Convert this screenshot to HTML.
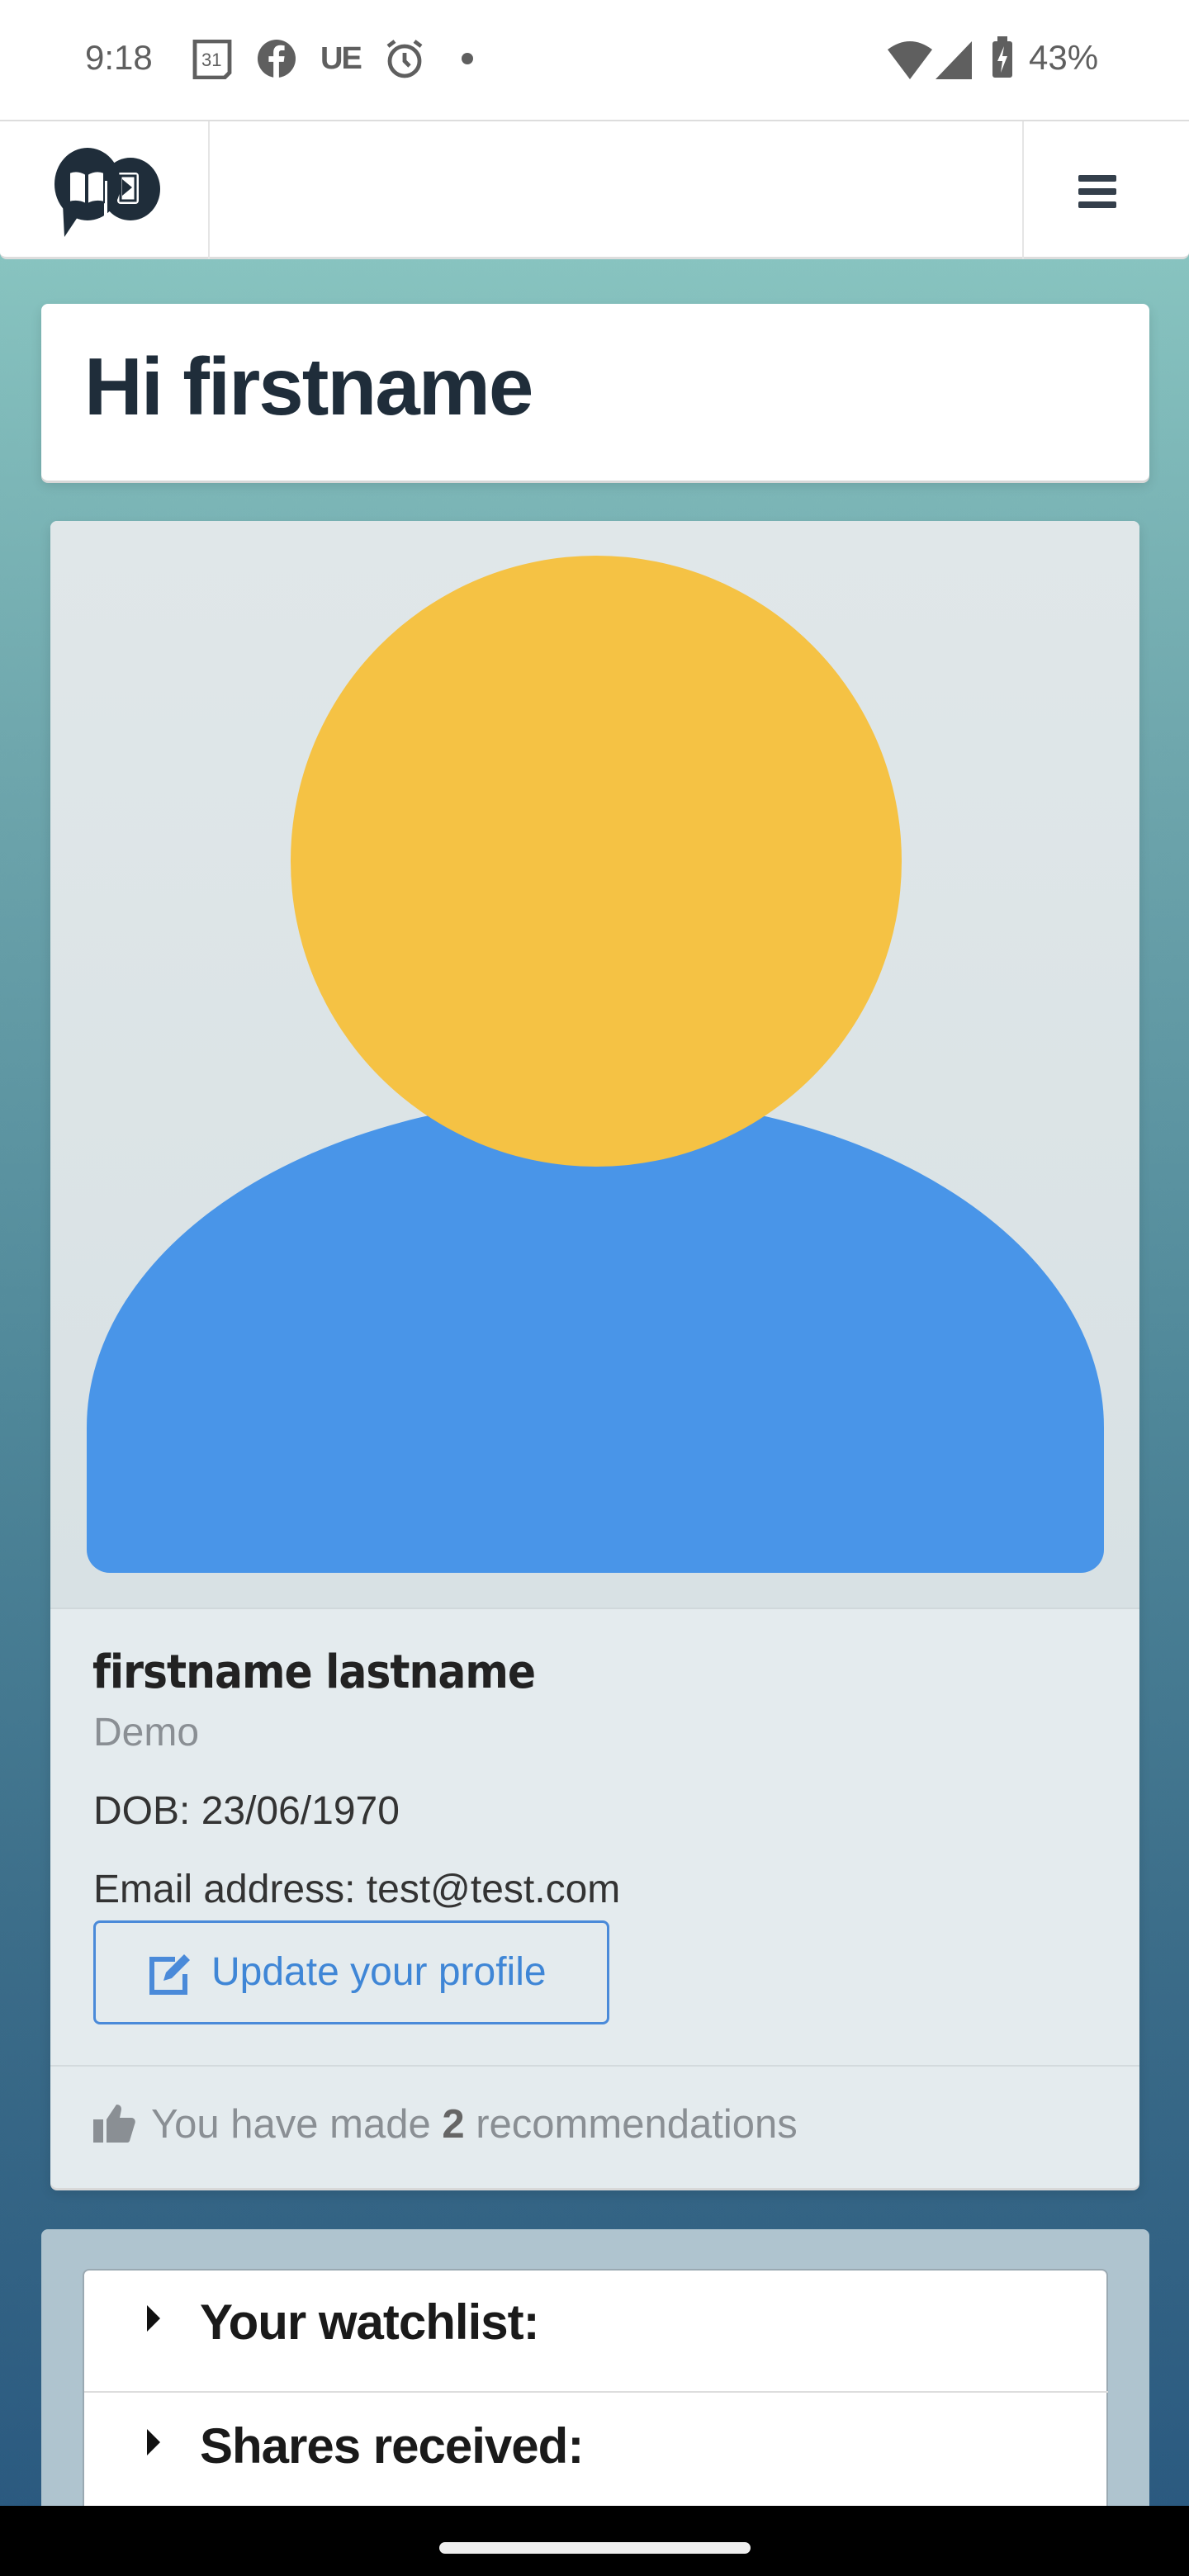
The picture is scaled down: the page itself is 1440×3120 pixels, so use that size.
<!DOCTYPE html>
<html><head><meta charset="utf-8"><style>
*{box-sizing:border-box;margin:0;padding:0}
html,body{width:1440px;height:3120px;overflow:hidden}
body{font-family:"Liberation Sans",sans-serif;position:relative;background:linear-gradient(180deg,#88c4c0 300px,#6fa7ad 900px,#4f8799 1700px,#3a6b88 2400px,#2b5a80 3040px)}
.abs{position:absolute}
.status{left:0;top:0;width:1440px;height:145px;background:#fff;color:#5f5f5f;font-size:40px}
.nav{left:0;top:145px;width:1440px;height:169px;background:#fff;border-bottom:3px solid #ddd;border-top:2px solid #ddd;border-radius:0 0 8px 8px}
.card{background:#fff;border-radius:8px;box-shadow:0 3px 0 #d8d8d8,0 6px 14px rgba(0,0,0,.12)}
</style></head><body>
<div class="abs status">
 <div class="abs" style="left:103px;top:46px;font-size:42px">9:18</div>
 <svg class="abs" style="left:232px;top:48px" width="52" height="48" viewBox="0 0 26 24"><path d="M2 1h21v19l-3 3H2z" fill="none" stroke="#5f5f5f" stroke-width="2.4"/><text x="6" y="16" font-size="11" font-family="Liberation Sans" fill="#5f5f5f">31</text></svg>
 <svg class="abs" style="left:312px;top:48px" width="46" height="46" viewBox="0 0 24 24"><circle cx="12" cy="12" r="12" fill="#5f5f5f"/><path d="M13.5 24V14h3l.5-3.5h-3.5V8.5c0-1 .4-1.7 1.8-1.7H17V3.7c-.4 0-1.5-.2-2.7-.2-2.7 0-4.3 1.6-4.3 4.5v2.5H7V14h3v10z" fill="#fff"/></svg>
 <div class="abs" style="left:388px;top:50px;font-size:38px;font-weight:bold;letter-spacing:-2px">UE</div>
 <svg class="abs" style="left:466px;top:46px" width="48" height="50" viewBox="0 0 24 25"><circle cx="12" cy="14" r="9" fill="none" stroke="#5f5f5f" stroke-width="2.4"/><path d="M12 9v5l3 3M2 5l4-3M22 5l-4-3" stroke="#5f5f5f" stroke-width="2.4" fill="none"/></svg>
 <div class="abs" style="left:559px;top:64px;width:14px;height:14px;border-radius:50%;background:#5f5f5f"></div>
 <svg class="abs" style="left:1075px;top:50px" width="54" height="46" viewBox="0 0 27 23"><path d="M13.5 23L0 5Q13.5-5 27 5z" fill="#5f5f5f"/></svg>
 <svg class="abs" style="left:1133px;top:50px" width="44" height="46" viewBox="0 0 22 23"><path d="M0 23L22 0v23z" fill="#5f5f5f"/></svg>
 <svg class="abs" style="left:1200px;top:44px" width="28" height="52" viewBox="0 0 14 26"><rect x="4" y="0" width="6" height="3" fill="#5f5f5f"/><rect x="1" y="3" width="12" height="22" rx="1.5" fill="#5f5f5f"/><path d="M8 6l-4 9h3l-1 7 4-10H7z" fill="#fff"/></svg>
 <div class="abs" style="left:1246px;top:46px;font-size:42px">43%</div>
</div>
<div class="abs nav">
 <div class="abs" style="left:252px;top:0;width:2px;height:167px;background:#e5e5e5"></div>
 <div class="abs" style="left:1238px;top:0;width:2px;height:167px;background:#e5e5e5"></div>
 <svg class="abs" style="left:62px;top:30px" width="134" height="110" viewBox="0 0 134 110">
  <ellipse cx="96" cy="52" rx="36" ry="38" fill="#1f2d3a"/>
  <rect x="80" y="32" width="26" height="38" rx="4" fill="#fff"/><path d="M86 40l12 10-12 10z" fill="#1f2d3a"/><rect x="84" y="36" width="18" height="30" fill="none" stroke="#1f2d3a" stroke-width="3"/>
  <ellipse cx="44" cy="46" rx="40" ry="44" fill="#1f2d3a"/><path d="M14 70l2 40 20-30z" fill="#1f2d3a"/>
  <path d="M66 42v50" stroke="#fff" stroke-width="4"/>
  <path d="M22 32q10-4 20 2v36q-10-5-20-2zM44 34q10-6 20-2v36q-10-3-20 2z" fill="#fff" stroke="#1f2d3a" stroke-width="2"/>
 </svg>
 <div class="abs" style="left:1306px;top:65px;width:46px;height:8px;background:#343f4b;border-radius:2px"></div>
 <div class="abs" style="left:1306px;top:81px;width:46px;height:8px;background:#343f4b;border-radius:2px"></div>
 <div class="abs" style="left:1306px;top:97px;width:46px;height:8px;background:#343f4b;border-radius:2px"></div>
</div>
<div class="abs card" style="left:50px;top:368px;width:1342px;height:214px">
 <div class="abs" style="left:52px;top:44px;font-size:98px;font-weight:bold;color:#1f2d3a;letter-spacing:-2px">Hi firstname</div>
</div>
<div class="abs card" style="left:61px;top:631px;width:1319px;height:2019px;background:#e4ebee;overflow:hidden">
 <div class="abs" style="left:0;top:0;width:1319px;height:1318px;background:linear-gradient(180deg,#e0e7e9,#d8e1e4);border-bottom:2px solid #d0d8db"></div>
 <div class="abs" style="left:44px;top:698px;width:1232px;height:576px;background:#4995e8;border-radius:616px 616px 28px 28px / 400px 400px 28px 28px"></div>
 <div class="abs" style="left:291px;top:42px;width:740px;height:740px;border-radius:50%;background:#f5c244"></div>
 <div class="abs" style="left:51px;top:1362px;font-size:56px;font-weight:bold;color:#222;font-family:'DejaVu Sans Condensed','Liberation Sans',sans-serif;letter-spacing:-1px">firstname lastname</div>
 <div class="abs" style="left:52px;top:1440px;font-size:48px;color:#8a8f94">Demo</div>
 <div class="abs" style="left:52px;top:1535px;font-size:48px;color:#333">DOB: 23/06/1970</div>
 <div class="abs" style="left:52px;top:1630px;font-size:48px;color:#333">Email address: test@test.com</div>
 <div class="abs" style="left:52px;top:1695px;width:625px;height:126px;border:3px solid #4a8ad9;border-radius:8px">
  <svg class="abs" style="left:62px;top:34px" width="58" height="54" viewBox="0 0 58 54"><path d="M34 10H6v40h40V28" fill="none" stroke="#4a8ad9" stroke-width="6"/><path d="M20 36l3-10 22-22 7 7-22 22z" fill="#4a8ad9"/></svg>
  <div class="abs" style="left:140px;top:32px;font-size:48px;color:#3f86d6">Update your profile</div>
 </div>
 <div class="abs" style="left:0;top:1870px;width:1319px;height:2px;background:#d3dadd"></div>
 <svg class="abs" style="left:52px;top:1914px" width="52" height="52" viewBox="0 0 26 26"><rect x="0" y="11" width="6" height="14" fill="#8a8f94"/><path d="M8 11l6-9c2 0 3 1 3 3l-1 5h7c2 0 3 2 2 4l-3 10c-.5 1-1 1-2 1H8z" fill="#8a8f94"/></svg>
 <div class="abs" style="left:122px;top:1914px;font-size:49px;color:#8a8f94">You have made <b style="color:#666">2</b> recommendations</div>
</div>
<div class="abs" style="left:50px;top:2700px;width:1342px;height:400px;background:#afc4cf;border-radius:8px">
 <div class="abs" style="left:50px;top:48px;width:1242px;height:400px;background:#fff;border:2px solid #9aa9b2;border-radius:8px">
  <div class="abs" style="left:76px;top:42px;width:0;height:0;border-left:16px solid #111;border-top:16px solid transparent;border-bottom:16px solid transparent"></div>
  <div class="abs" style="left:140px;top:28px;font-size:60px;font-weight:bold;color:#1a1a1a;letter-spacing:-1px">Your watchlist:</div>
  <div class="abs" style="left:0;top:146px;width:1240px;height:2px;background:#ddd"></div>
  <div class="abs" style="left:76px;top:192px;width:0;height:0;border-left:16px solid #111;border-top:16px solid transparent;border-bottom:16px solid transparent"></div>
  <div class="abs" style="left:140px;top:178px;font-size:60px;font-weight:bold;color:#1a1a1a;letter-spacing:-1px">Shares received:</div>
 </div>
</div>
<div class="abs" style="left:0;top:3035px;width:1440px;height:85px;background:#000">
 <div class="abs" style="left:532px;top:44px;width:377px;height:14px;border-radius:7px;background:#eee"></div>
</div>
</body></html>
